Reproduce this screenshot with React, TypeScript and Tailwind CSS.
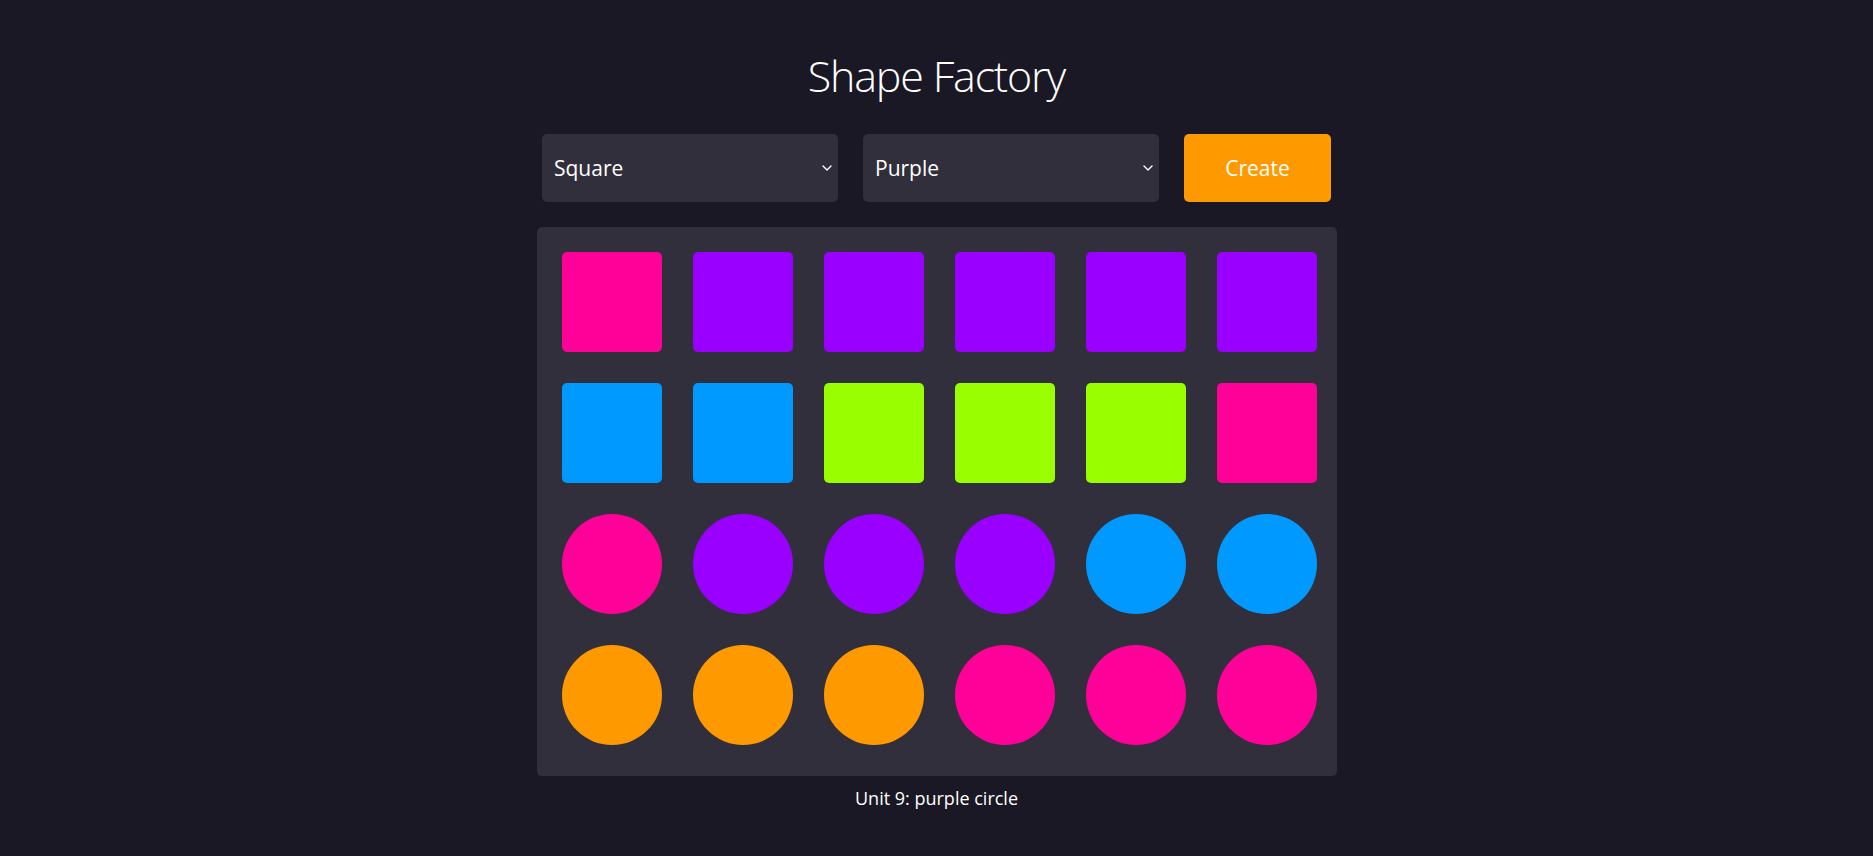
import React from "react";

type Shape = { kind: "square" | "circle"; color: string };

const P = "bg-[#ff0099]";
const V = "bg-[#9900ff]";
const B = "bg-[#0099ff]";
const G = "bg-[#99ff00]";
const O = "bg-[#ff9900]";

const rows: Shape[][] = [
  [P, V, V, V, V, V].map((c) => ({ kind: "square" as const, color: c })),
  [B, B, G, G, G, P].map((c) => ({ kind: "square" as const, color: c })),
  [P, V, V, V, B, B].map((c) => ({ kind: "circle" as const, color: c })),
  [O, O, O, P, P, P].map((c) => ({ kind: "circle" as const, color: c })),
];

function Chevron() {
  return (
    <svg
      className="pointer-events-none absolute right-[6px] top-1/2 -translate-y-1/2"
      width="10"
      height="6"
      viewBox="0 0 10 6"
      fill="none"
    >
      <path d="M1 1l4 4 4-4" stroke="#ffffff" strokeWidth="1.4" strokeLinecap="round" strokeLinejoin="round" />
    </svg>
  );
}

function Select({ options, value }: { options: string[]; value: string }) {
  return (
    <div className="relative w-[296px] h-[68px]">
      <select
        defaultValue={value}
        className="appearance-none w-full h-full bg-[#322f3d] text-white text-[21px] pl-[12px] pr-[24px] pt-[2px] rounded-[5px] outline-none border-0"
      >
        {options.map((o) => (
          <option key={o} value={o}>
            {o}
          </option>
        ))}
      </select>
      <Chevron />
    </div>
  );
}

export default function App() {
  return (
    <div className="min-h-screen w-full bg-[#191824] flex flex-col items-center text-white font-['Open_Sans','Noto_Sans',sans-serif]">
      <h1 className="mt-[46px] h-[60px] leading-[60px] text-[43px] font-light tracking-[-1.2px]">
        Shape Factory
      </h1>
      <div className="mt-[28px] flex gap-[25px]">
        <Select options={["Square", "Circle"]} value="Square" />
        <Select options={["Pink", "Purple", "Blue", "Green", "Orange"]} value="Purple" />
        <button className="w-[147px] h-[68px] bg-[#ff9900] text-white text-[21px] pt-[2px] rounded-[5px]">
          Create
        </button>
      </div>
      <div className="mt-[25px] w-[800px] bg-[#322f3d] rounded-[5px] pt-[25px] pl-[25px] pr-[19px] pb-[31px]">
        <div className="grid grid-cols-[repeat(6,100px)] gap-x-[31.2px] gap-y-[31px]">
          {rows.flat().map((s, i) => (
            <div
              key={i}
              className={`w-[100px] h-[100px] ${s.color} ${s.kind === "circle" ? "rounded-full" : "rounded-[5px]"}`}
            />
          ))}
        </div>
      </div>
      <p className="mt-[10px] h-[24px] leading-[24px] text-[18px]">Unit 9: purple circle</p>
    </div>
  );
}
